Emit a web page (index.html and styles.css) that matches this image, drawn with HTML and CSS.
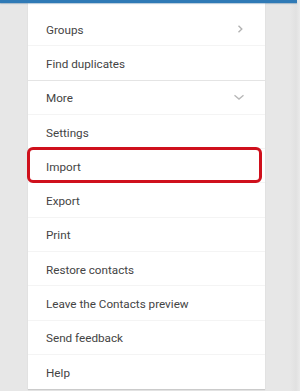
FILE: index.html
```html
<!DOCTYPE html>
<html>
<head>
<meta charset="utf-8">
<link rel="stylesheet" href="styles.css">
</head>
<body>
<div class="topbar"></div>
<div class="stage">
  <div class="card">
    <div class="item">
      <span>Groups</span>
      <svg class="chev" width="10" height="10" viewBox="0 0 10 10"><path d="M3.5 1.8 L6.8 5 L3.5 8.2" fill="none" stroke="#b3b3b3" stroke-width="1.4"/></svg>
    </div>
    <div class="item section-end"><span>Find duplicates</span></div>
    <div class="item">
      <span>More</span>
      <svg class="chev" width="12" height="10" viewBox="0 0 12 10"><path d="M1.5 3.2 L6 7 L10.5 3.2" fill="none" stroke="#b8b8b8" stroke-width="1.4"/></svg>
    </div>
    <div class="item"><span>Settings</span></div>
    <div class="item highlighted"><span>Import</span><div class="mark"></div></div>
    <div class="item"><span>Export</span></div>
    <div class="item"><span>Print</span></div>
    <div class="item"><span>Restore contacts</span></div>
    <div class="item"><span>Leave the Contacts preview</span></div>
    <div class="item"><span>Send feedback</span></div>
    <div class="item last"><span>Help</span></div>
  </div>
  <div class="edge"></div>
</div>
</body>
</html>
```
FILE: styles.css
```css
html, body {
  margin: 0;
  padding: 0;
}
body {
  width: 300px;
  height: 391px;
  overflow: hidden;
  background: #e7e7e7;
  font-family: Roboto, "Noto Sans", sans-serif;
}
.topbar {
  height: 3px;
  background: #2f7ab6;
  box-shadow: 0 1px 1px rgba(40, 100, 150, 0.35);
  margin-right: 3px;
  position: relative;
  z-index: 2;
}
.stage {
  display: flex;
  height: 388px;
}
.card {
  margin-left: 28px;
  width: 237px;
  background: #ffffff;
  padding-top: 9px;
  box-sizing: border-box;
  height: 386px;
  box-shadow: 0 1px 1px rgba(0, 0, 0, 0.12);
}
.edge {
  margin-left: auto;
  width: 10px;
  background: linear-gradient(to right, #e7e7e7, #e1e1e1 60%, #eaeaea);
}
.item {
  position: relative;
  height: 34.3px;
  box-sizing: border-box;
  display: flex;
  align-items: center;
  justify-content: space-between;
  padding: 0 20px 0 18px;
  font-size: 11.7px;
  color: #444444;
  border-bottom: 1px solid #f4f4f4;
}
.item span {
  padding-top: 2px;
}
.item.section-end {
  border-bottom-color: #e4e4e4;
}
.item.last {
  border-bottom: none;
}
.chev {
  display: block;
}
.mark {
  position: absolute;
  left: -1px;
  right: 3px;
  top: -2px;
  bottom: -1px;
  border: 3px solid #cf101c;
  border-radius: 6px;
  box-sizing: border-box;
}
```
